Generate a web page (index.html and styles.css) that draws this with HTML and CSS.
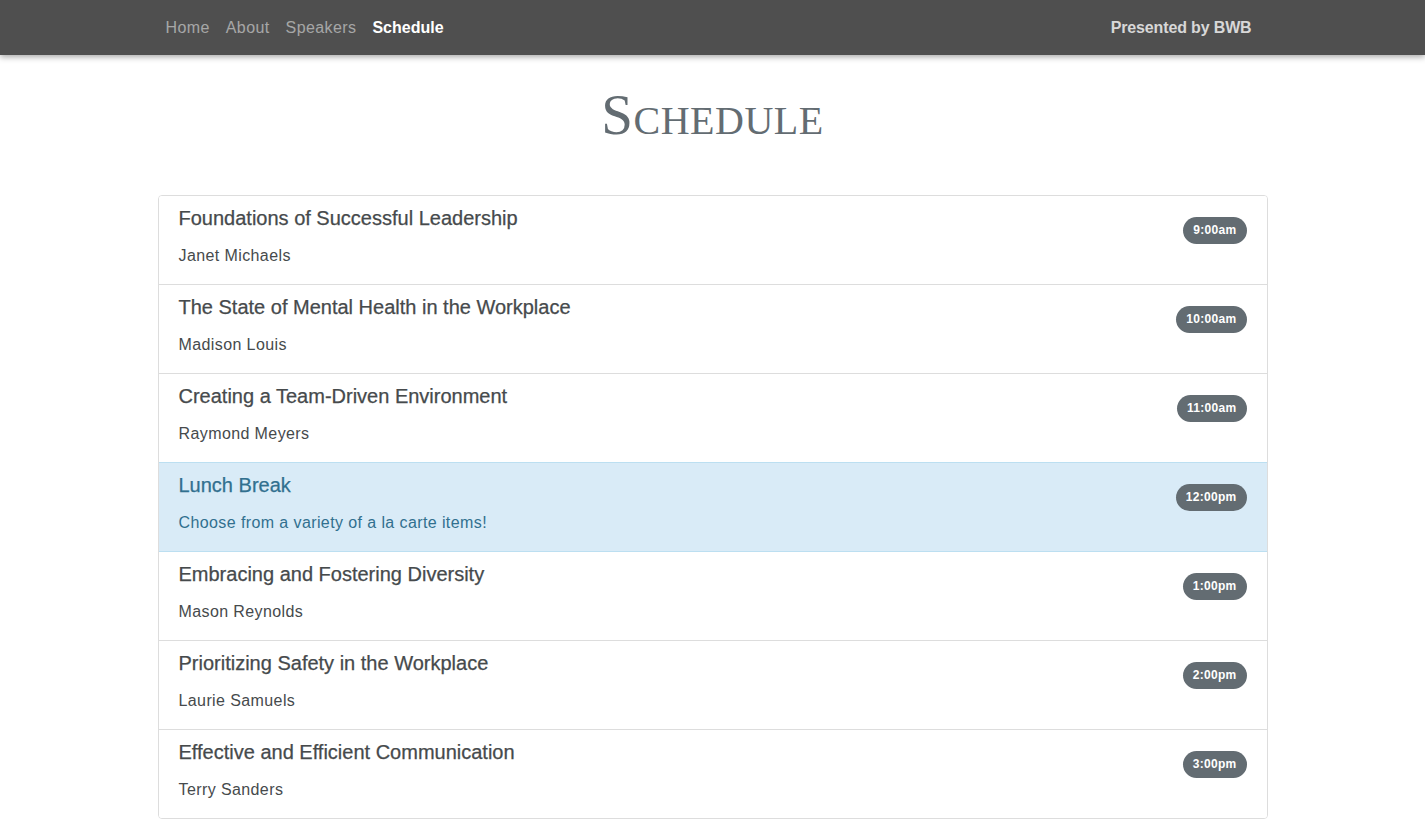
FILE: index.html
```html
<!DOCTYPE html>
<html lang="en">
<head>
<meta charset="utf-8">
<title>Schedule</title>
<link rel="stylesheet" href="styles.css">
</head>
<body>
<nav class="navbar">
  <div class="container nav-inner">
    <ul class="nav-links">
      <li><a class="nav-link" href="#">Home</a></li>
      <li><a class="nav-link" href="#">About</a></li>
      <li><a class="nav-link" href="#">Speakers</a></li>
      <li><a class="nav-link active" href="#">Schedule</a></li>
    </ul>
    <span class="nav-text">Presented by BWB</span>
  </div>
</nav>
<main class="container">
  <h1 class="page-title">Schedule</h1>
  <ul class="list-group">
    <li class="list-item">
      <div class="item-body"><h5 class="item-title">Foundations of Successful Leadership</h5><p class="item-text">Janet Michaels</p></div>
      <span class="badge">9:00am</span>
    </li>
    <li class="list-item">
      <div class="item-body"><h5 class="item-title">The State of Mental Health in the Workplace</h5><p class="item-text">Madison Louis</p></div>
      <span class="badge">10:00am</span>
    </li>
    <li class="list-item">
      <div class="item-body"><h5 class="item-title">Creating a Team-Driven Environment</h5><p class="item-text">Raymond Meyers</p></div>
      <span class="badge">11:00am</span>
    </li>
    <li class="list-item list-item-info">
      <div class="item-body"><h5 class="item-title">Lunch Break</h5><p class="item-text">Choose from a variety of a la carte items!</p></div>
      <span class="badge">12:00pm</span>
    </li>
    <li class="list-item">
      <div class="item-body"><h5 class="item-title">Embracing and Fostering Diversity</h5><p class="item-text">Mason Reynolds</p></div>
      <span class="badge">1:00pm</span>
    </li>
    <li class="list-item">
      <div class="item-body"><h5 class="item-title">Prioritizing Safety in the Workplace</h5><p class="item-text">Laurie Samuels</p></div>
      <span class="badge">2:00pm</span>
    </li>
    <li class="list-item">
      <div class="item-body"><h5 class="item-title">Effective and Efficient Communication</h5><p class="item-text">Terry Sanders</p></div>
      <span class="badge">3:00pm</span>
    </li>
  </ul>
</main>
</body>
</html>
```
FILE: styles.css
```css
* { box-sizing: border-box; }
html, body { margin: 0; padding: 0; }
body {
  font-family: "Liberation Sans", Arial, sans-serif;
  font-size: 16px;
  line-height: 1.5;
  color: #292b2c;
  background: #fff;
}
.container {
  width: 1140px;
  margin: 0 auto;
  padding: 0 15px;
}
.navbar {
  background: #4f4f4f;
  height: 55px;
  box-shadow: 0 2px 6px rgba(0,0,0,0.35);
  position: relative;
  z-index: 1;
}
.nav-inner {
  display: flex;
  align-items: center;
  justify-content: space-between;
  height: 55px;
}
.nav-links {
  display: flex;
  list-style: none;
  margin: 0;
  padding: 0;
}
.nav-link {
  display: block;
  padding: 8px;
  color: rgba(255,255,255,0.5);
  text-decoration: none;
  font-size: 16px;
  letter-spacing: 0.4px;
}
.nav-link.active {
  color: #fff;
  font-weight: bold;
  letter-spacing: 0;
}
.nav-text {
  color: rgba(255,255,255,0.78);
  padding-right: 16px;
  font-weight: bold;
  letter-spacing: -0.15px;
}
.page-title {
  font-family: "Liberation Serif", "Times New Roman", serif;
  font-variant: small-caps;
  font-weight: normal;
  font-size: 57px;
  letter-spacing: 0.5px;
  line-height: 1.2;
  color: #636c72;
  text-align: center;
  margin: 0;
  padding: 26px 0 46px;
}
.list-group {
  list-style: none;
  margin: 0 0 20px;
  padding: 0;
  border: 1px solid #dddddd;
  border-radius: 4px;
  overflow: hidden;
}
.list-item {
  display: flex;
  justify-content: space-between;
  align-items: flex-start;
  padding: 10px 20px 10px;
  height: 89px;
  border-top: 1px solid #dddddd;
  background: #fff;
  color: #464a4c;
}
.list-item:first-child { border-top: none; height: 88px; }
.list-item-info {
  background: #d9ebf7;
  color: #31708f;
  border-top-color: #bcdff1;
}
.list-item-info + .list-item { border-top-color: #bcdff1; }
.item-title {
  margin: 0 0 14px;
  font-size: 20px;
  font-weight: normal;
  line-height: 24px;
  letter-spacing: 0;
  -webkit-text-stroke: 0.25px currentColor;
}
.item-text {
  margin: 0;
  font-size: 16px;
  line-height: 24px;
  letter-spacing: 0.4px;
}
.badge {
  margin-top: 11px;
  background: #636c72;
  color: #fff;
  font-size: 12px;
  font-weight: bold;
  line-height: 13px;
  letter-spacing: 0.3px;
  padding: 7px 10px;
  border-radius: 14px;
}
```
